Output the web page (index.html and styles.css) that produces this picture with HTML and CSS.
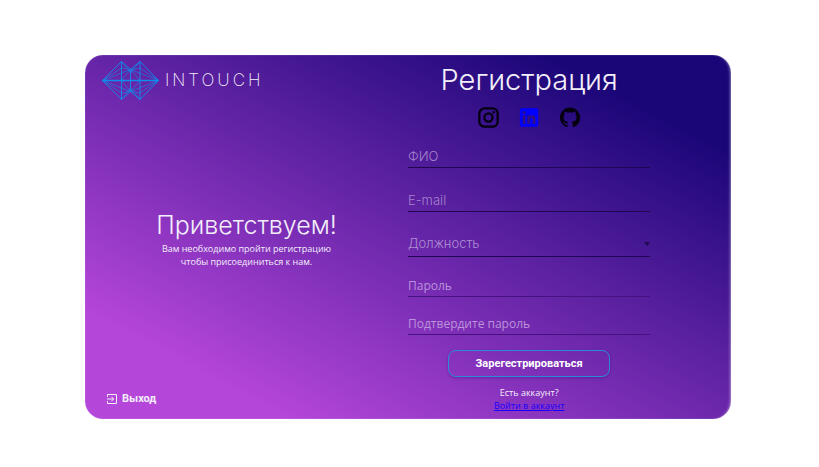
FILE: index.html
```html
<!DOCTYPE html>
<html lang="ru">
<head>
<meta charset="utf-8">
<meta name="viewport" content="width=device-width, initial-scale=1">
<title>Регистрация</title>
<link rel="stylesheet" href="styles.css">
</head>
<body>
<main class="card">
  <section class="welcome">
    <div class="brand">
      <svg class="brand-mark" viewBox="0 0 57 40" aria-hidden="true">
        <path d="M.5 20.500 19.500 1.500 28.500 9.500 38 1.500 56.500 20.500 38 39.500 28.500 31.500 19.500 39.500Z"/>
        <path d="M19.500 1.500V39.500M28.500 9.500V31.500M38 1.500V39.500"/>
        <path class="faint" d="M.5 20.500 19.500 8 28.500 9.500 38 8 56.500 20.500 38 33 28.500 31.500 19.500 33ZM.5 20.500 28.500 9.500 56.500 20.500 28.500 31.500ZM19.500 1.500 28.500 13 38 1.500M19.500 39.500 28.500 28 38 39.500M28.500 9.500 19.500 20.500 28.500 31.500 38 20.500Z"/>
        <path class="axis" d="M.5 20.500H56.500"/>
      </svg>
      <span class="brand-name">INTOUCH</span>
    </div>
    <div class="greeting">
      <h2 class="greeting-title">Приветствуем!</h2>
      <p class="note">Вам необходимо пройти регистрацию<br>чтобы присоединиться к нам.</p>
    </div>
    <button class="exit" type="button">
      <svg class="exit-icon" viewBox="0 0 10 10" aria-hidden="true"><path d="M.5 3V.5H9.500V9.500H.5V7M0 5H6.500M4.500 2.800 6.700 5 4.500 7.200"/></svg>
      Выход
    </button>
  </section>
  <form class="signup">
    <h1 class="title">Регистрация</h1>
    <nav class="social">
      <a class="social-link" href="#" aria-label="Instagram">
        <svg viewBox="0 0 24 24"><rect x="1.500" y="1.500" width="21" height="21" rx="6" fill="none" stroke="currentColor" stroke-width="2.600"/><circle cx="12" cy="12" r="4.700" fill="none" stroke="currentColor" stroke-width="2.500"/><circle cx="18" cy="6" r="1.400"/></svg>
      </a>
      <a class="social-link linkedin" href="#" aria-label="LinkedIn">
        <svg viewBox="0 0 24 24"><path fill-rule="evenodd" d="M3 1.500h17a2 2 0 0 1 2 2v17a2 2 0 0 1-2 2h-17a2 2 0 0 1-2-2v-17a2 2 0 0 1 2-2ZM4.200 9.500v10h3.200v-10ZM5.800 4.500a1.800 1.800 0 1 0 0 3.600 1.800 1.800 0 0 0 0-3.600ZM9.400 9.500v10h3.200v-5.300c0-2.500 3-2.600 3 0v5.300h3.200v-6.200c0-4.600-4.500-4.900-6.200-2.300V9.500Z"/></svg>
      </a>
      <a class="social-link" href="#" aria-label="GitHub">
        <svg viewBox="0 0 25 25"><path d="M12 .5C5.370.5 0 5.870 0 12.500c0 5.300 3.440 9.800 8.210 11.390.6.110.79-.26.79-.58v-2.230c-3.340.73-4.030-1.420-4.030-1.420-.55-1.390-1.330-1.760-1.330-1.760-1.090-.74.08-.73.08-.73 1.210.08 1.840 1.240 1.840 1.240 1.070 1.830 2.810 1.300 3.490 1 .11-.78.42-1.310.76-1.610-2.660-.3-5.470-1.330-5.470-5.930 0-1.310.47-2.380 1.240-3.220-.12-.3-.54-1.520.12-3.180 0 0 1.010-.32 3.300 1.230a11.500 11.500 0 0 1 6 0c2.290-1.550 3.300-1.230 3.300-1.230.66 1.660.24 2.880.12 3.180.77.84 1.230 1.910 1.230 3.220 0 4.610-2.800 5.630-5.480 5.920.43.370.82 1.100.82 2.220v3.290c0 .32.19.69.8.58A12 12 0 0 0 24 12.500C24 5.870 18.630.5 12 .5Z"/></svg>
      </a>
    </nav>
    <div class="fields">
      <input class="field" type="text" placeholder="ФИО" aria-label="ФИО">
      <input class="field" type="email" placeholder="E-mail" aria-label="E-mail">
      <div class="select-wrap">
        <select class="field" aria-label="Должность"><option>Должность</option></select>
      </div>
    </div>
    <div class="passwords">
      <input class="field secret" type="password" placeholder="Пароль" aria-label="Пароль">
      <input class="field secret" type="password" placeholder="Подтвердите пароль" aria-label="Подтвердите пароль">
    </div>
    <button class="submit" type="submit">Зарегестрироваться</button>
    <p class="note">Есть аккаунт?<br><a class="login" href="#">Войти в аккаунт</a></p>
  </form>
</main>
</body>
</html>
```
FILE: styles.css
```css
* {
  box-sizing: border-box;
}

body {
  --display: Inter, Roboto, sans-serif;
  --text: "Open Sans", "Noto Sans", sans-serif;
  --compact: Roboto, "Open Sans", sans-serif;
  margin: 0;
  min-height: 100vh;
  padding: 55px 88px 48px 85px;
  display: grid;
  background: #fff;
  color: #f3effa;
  font-family: var(--text);
}

h1, h2, p {
  margin: 0;
  font-weight: 300;
}

.card {
  display: grid;
  grid-template-columns: 1fr 1fr;
  border-radius: 18px;
  background: linear-gradient(28deg, #b546da 15%, #1b0678 86%);
  box-shadow: inset 0 0 1px rgba(255, 255, 255, 0.7), inset -3px 0 3px -2px rgba(255, 255, 255, 0.4);
}

.welcome {
  display: flex;
  flex-direction: column;
  padding: 5px 0 12px;
}

.brand {
  display: flex;
  align-items: center;
  gap: 6px;
  padding-left: 17px;
}

.brand-mark {
  width: 57px;
  height: 40px;
  fill: none;
  stroke: #0c8eec;
  stroke-width: 0.9;
}

.faint {
  stroke-width: 0.6;
}

.axis {
  stroke-width: 1.3;
}

.brand-name {
  font: 200 17px/20px var(--display);
  letter-spacing: 3px;
}

.greeting {
  margin: auto 0;
  padding-bottom: 16px;
  text-align: center;
}

.greeting-title {
  font: 300 25px/34px var(--display);
}

.note {
  font: 500 9px/13px var(--text);
  text-align: center;
}

.exit {
  display: flex;
  align-items: center;
  align-self: flex-start;
  gap: 5px;
  margin-left: 22px;
  padding: 0;
  border: 0;
  background: none;
  color: inherit;
  font: 700 11px/16px var(--compact);
}

.exit-icon {
  width: 10px;
  height: 10px;
  fill: none;
  stroke: currentColor;
}

.signup {
  display: flex;
  flex-direction: column;
  align-items: center;
  width: 75%;
  padding: 6px 0;
}

.title {
  font: 300 29px/38px var(--display);
}

.social {
  display: flex;
  gap: 20px;
  margin-top: 8px;
}

.social-link {
  display: block;
  width: 21px;
  height: 21px;
  color: #050010;
}

.social-link svg {
  display: block;
  fill: currentColor;
}

.linkedin {
  color: #00f;
}

.fields,
.passwords {
  display: grid;
  width: 100%;
}

.fields {
  gap: 20px;
  margin-top: 16px;
}

.passwords {
  gap: 14px;
  margin-top: 16px;
}

.field {
  display: block;
  appearance: none;
  width: 100%;
  height: 24px;
  margin: 0;
  padding: 1px 0 0;
  border: 0;
  border-bottom: 1px solid #1f0850;
  border-radius: 0;
  outline: 0;
  background: none;
  color: #af8fd4;
  font: 300 13px/20px var(--display);
}

select.field {
  height: 25px;
  padding: 0 0 2px;
}

.field::placeholder {
  color: #a583cd;
  opacity: 1;
}

.secret {
  border-bottom-color: #451280;
  font: 400 12px/20px var(--text);
}

.secret::placeholder {
  color: #bd92dc;
}

.select-wrap {
  position: relative;
}

.select-wrap::after {
  content: "";
  position: absolute;
  right: 0;
  top: 10px;
  border: 3px solid transparent;
  border-top: 4px solid #1f0850;
  border-bottom: 0;
}

.submit {
  width: 67%;
  height: 27px;
  margin-top: 15px;
  padding: 0;
  border: 1px solid #2c88dc;
  border-radius: 8px;
  background: none;
  box-shadow: 0 1px 3px rgba(40, 0, 80, 0.3);
  color: #fff;
  font: 700 11px/16px var(--compact);
}

.signup .note {
  margin-top: 9px;
}

.login {
  color: #1400ff;
}
```
